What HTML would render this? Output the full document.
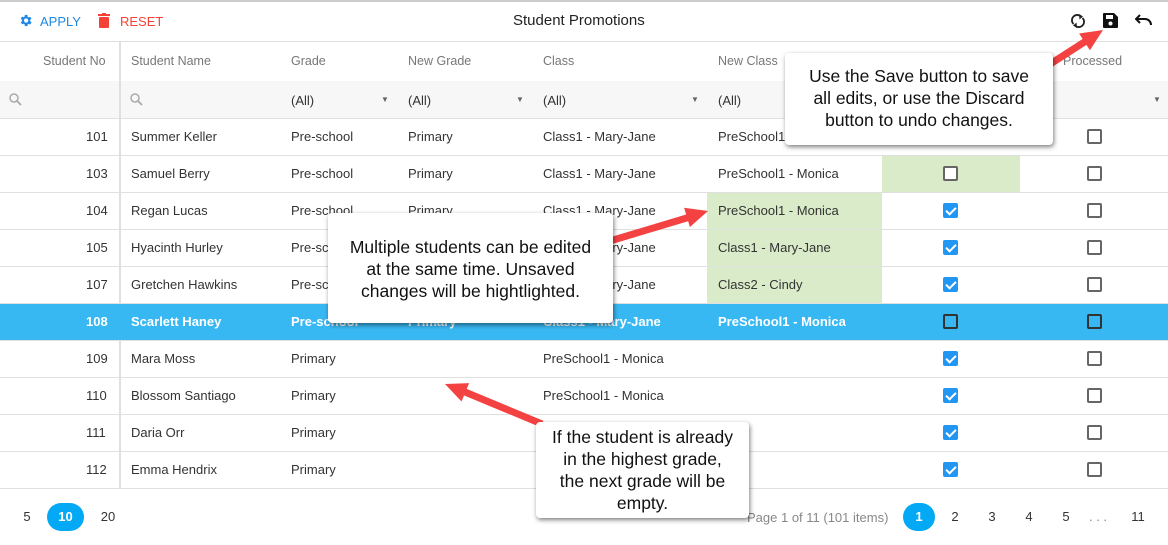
<!DOCTYPE html>
<html><head><meta charset="utf-8"><style>
*{box-sizing:border-box;margin:0;padding:0}
body{width:1168px;height:545px;overflow:hidden;background:#fff;font-family:"Liberation Sans",sans-serif;font-size:13px;color:#333;position:relative}
.a{position:absolute;white-space:nowrap}
.hl{position:absolute;left:0;width:1168px;height:1px;background:#e0e0e0}
.cb{position:absolute;width:15px;height:15px;border:2px solid #666;border-radius:2px;background:#fff}
.cb.on{background:#2196f3;border-color:#2196f3}
.cb.on:after{content:"";position:absolute;left:3px;top:0px;width:4px;height:8px;border:solid #fff;border-width:0 2px 2px 0;transform:rotate(45deg)}
.hd{color:#777;font-size:12.5px}
.tip{position:absolute;background:#fff;border-radius:4px;box-shadow:1px 2px 5px rgba(0,0,0,.5);font-size:17.5px;color:#111;text-align:center;line-height:22px}
.pg{position:absolute;top:503px;width:32px;height:28px;text-align:center;line-height:28px;font-size:13px;color:#333}
.pg.on{background:#03a9f4;color:#fff;border-radius:16px;font-weight:bold}
</style></head><body>
<div class="hl" style="top:0;height:2px;background:#ccc"></div>
<svg class="a" style="left:18px;top:13px" width="15" height="15" viewBox="0 0 24 24"><path fill="#1e88e5" d="M19.4 13a7.5 7.5 0 0 0 0-2l2.1-1.6-2-3.5-2.5 1a7 7 0 0 0-1.7-1L15 3h-4l-.4 2.7a7 7 0 0 0-1.7 1l-2.5-1-2 3.5L6.6 11a7.5 7.5 0 0 0 0 2l-2.1 1.6 2 3.5 2.5-1a7 7 0 0 0 1.7 1L11 21h4l.4-2.7a7 7 0 0 0 1.7-1l2.5 1 2-3.5zM13 15.5a3.5 3.5 0 1 1 0-7 3.5 3.5 0 0 1 0 7z"/></svg>
<div class="a" style="left:40px;top:14px;color:#1e88e5;font-size:13px">APPLY</div>
<svg class="a" style="left:98px;top:13px" width="12" height="15" viewBox="0 0 12 15"><rect x="0" y="1" width="12" height="2" fill="#f44336"/><rect x="4" y="0" width="4" height="2" fill="#f44336"/><rect x="1" y="4" width="10" height="11" rx="1" fill="#f44336"/></svg>
<div class="a" style="left:120px;top:14px;color:#f44336;font-size:13px">RESET</div>
<div class="a" style="left:513px;top:12px;font-size:15px;color:#222">Student Promotions</div>
<svg class="a" style="left:1071px;top:13px" width="14" height="16" viewBox="0 0 14 16"><path d="M2.5 11A5 5 0 0 1 10 3.5M11.5 5A5 5 0 0 1 4 12.5" fill="none" stroke="#222" stroke-width="1.8"/><path d="M8 1l4 2.5-3.5 3z M6 15l-4-2.5 3.5-3z" fill="#222"/></svg>
<svg class="a" style="left:1103px;top:13px" width="15" height="15" viewBox="0 0 15 15"><path d="M0 1a1 1 0 0 1 1-1h10l4 4v10a1 1 0 0 1-1 1H1a1 1 0 0 1-1-1z" fill="#111"/><rect x="3" y="2" width="7" height="4" fill="#fff"/><circle cx="7.5" cy="10.5" r="2" fill="#fff"/></svg>
<svg class="a" style="left:1135px;top:14px" width="17" height="12" viewBox="0 0 17 12"><path d="M5 1 1 5l4 4M1 5h9a6 6 0 0 1 6 6" fill="none" stroke="#111" stroke-width="2"/></svg>
<div class="hl" style="top:41px"></div>
<div class="hl" style="top:81px"></div>
<div class="a" style="left:0;top:81px;width:1168px;height:37px;background:#f7f7f7"></div>
<div class="a" style="left:119px;top:41px;width:2px;height:447px;background:#e0e0e0"></div>
<div class="a hd" style="left:43px;top:54px">Student No</div>
<div class="a hd" style="left:131px;top:54px">Student Name</div>
<div class="a hd" style="left:291px;top:54px">Grade</div>
<div class="a hd" style="left:408px;top:54px">New Grade</div>
<div class="a hd" style="left:543px;top:54px">Class</div>
<div class="a hd" style="left:718px;top:54px">New Class</div>
<div class="a hd" style="left:1063px;top:54px">Processed</div>
<svg class="a" style="left:9px;top:93px" width="13" height="13" viewBox="0 0 13 13"><circle cx="5" cy="5" r="4" fill="none" stroke="#aaa" stroke-width="1.5"/><path d="M8 8l4 4" stroke="#aaa" stroke-width="1.8"/></svg>
<svg class="a" style="left:130px;top:93px" width="13" height="13" viewBox="0 0 13 13"><circle cx="5" cy="5" r="4" fill="none" stroke="#aaa" stroke-width="1.5"/><path d="M8 8l4 4" stroke="#aaa" stroke-width="1.8"/></svg>
<div class="a" style="left:291px;top:93px">(All)</div><div class="a" style="left:381px;top:95px;font-size:8px;color:#666">▼</div>
<div class="a" style="left:408px;top:93px">(All)</div><div class="a" style="left:516px;top:95px;font-size:8px;color:#666">▼</div>
<div class="a" style="left:543px;top:93px">(All)</div><div class="a" style="left:691px;top:95px;font-size:8px;color:#666">▼</div>
<div class="a" style="left:718px;top:93px">(All)</div><div class="a" style="left:1153px;top:95px;font-size:8px;color:#666">▼</div>
<div class="hl" style="top:118px"></div>

<div class="a" style="left:882px;top:155px;width:138px;height:37px;background:#d9ebc8"></div>
<div class="a" style="left:707px;top:192px;width:175px;height:111px;background:#d9ebc8"></div>
<div class="a" style="left:0;top:303px;width:1168px;height:37px;background:#38b8f2"></div>

<div class="hl" style="top:155px"></div><div class="hl" style="top:192px"></div><div class="hl" style="top:229px"></div><div class="hl" style="top:266px"></div><div class="hl" style="top:303px"></div><div class="hl" style="top:340px"></div><div class="hl" style="top:377px"></div><div class="hl" style="top:414px"></div><div class="hl" style="top:451px"></div><div class="hl" style="top:488px"></div>

<div class="a" style="left:86px;top:129px">101</div><div class="a" style="left:131px;top:129px">Summer Keller</div><div class="a" style="left:291px;top:129px">Pre-school</div><div class="a" style="left:408px;top:129px">Primary</div><div class="a" style="left:543px;top:129px">Class1 - Mary-Jane</div><div class="a" style="left:718px;top:129px">PreSchool1 - Monica</div><div class="cb" style="left:1087px;top:129px"></div>
<div class="a" style="left:86px;top:166px">103</div><div class="a" style="left:131px;top:166px">Samuel Berry</div><div class="a" style="left:291px;top:166px">Pre-school</div><div class="a" style="left:408px;top:166px">Primary</div><div class="a" style="left:543px;top:166px">Class1 - Mary-Jane</div><div class="a" style="left:718px;top:166px">PreSchool1 - Monica</div><div class="cb" style="left:943px;top:166px"></div><div class="cb" style="left:1087px;top:166px"></div>
<div class="a" style="left:86px;top:203px">104</div><div class="a" style="left:131px;top:203px">Regan Lucas</div><div class="a" style="left:291px;top:203px">Pre-school</div><div class="a" style="left:408px;top:203px">Primary</div><div class="a" style="left:543px;top:203px">Class1 - Mary-Jane</div><div class="a" style="left:718px;top:203px">PreSchool1 - Monica</div><div class="cb on" style="left:943px;top:203px"></div><div class="cb" style="left:1087px;top:203px"></div>
<div class="a" style="left:86px;top:240px">105</div><div class="a" style="left:131px;top:240px">Hyacinth Hurley</div><div class="a" style="left:291px;top:240px">Pre-school</div><div class="a" style="left:543px;top:240px">Class1 - Mary-Jane</div><div class="a" style="left:718px;top:240px">Class1 - Mary-Jane</div><div class="cb on" style="left:943px;top:240px"></div><div class="cb" style="left:1087px;top:240px"></div>
<div class="a" style="left:86px;top:277px">107</div><div class="a" style="left:131px;top:277px">Gretchen Hawkins</div><div class="a" style="left:291px;top:277px">Pre-school</div><div class="a" style="left:543px;top:277px">Class1 - Mary-Jane</div><div class="a" style="left:718px;top:277px">Class2 - Cindy</div><div class="cb on" style="left:943px;top:277px"></div><div class="cb" style="left:1087px;top:277px"></div>
<div style="color:#fff;font-weight:bold"><div class="a" style="left:86px;top:314px">108</div><div class="a" style="left:131px;top:314px">Scarlett Haney</div><div class="a" style="left:291px;top:314px">Pre-school</div><div class="a" style="left:408px;top:314px">Primary</div><div class="a" style="left:543px;top:314px">Class1 - Mary-Jane</div><div class="a" style="left:718px;top:314px">PreSchool1 - Monica</div></div><div class="cb" style="left:943px;top:314px;background:transparent;border-color:#333"></div><div class="cb" style="left:1087px;top:314px;background:transparent;border-color:#333"></div>
<div class="a" style="left:86px;top:351px">109</div><div class="a" style="left:131px;top:351px">Mara Moss</div><div class="a" style="left:291px;top:351px">Primary</div><div class="a" style="left:543px;top:351px">PreSchool1 - Monica</div><div class="cb on" style="left:943px;top:351px"></div><div class="cb" style="left:1087px;top:351px"></div>
<div class="a" style="left:86px;top:388px">110</div><div class="a" style="left:131px;top:388px">Blossom Santiago</div><div class="a" style="left:291px;top:388px">Primary</div><div class="a" style="left:543px;top:388px">PreSchool1 - Monica</div><div class="cb on" style="left:943px;top:388px"></div><div class="cb" style="left:1087px;top:388px"></div>
<div class="a" style="left:86px;top:425px">111</div><div class="a" style="left:131px;top:425px">Daria Orr</div><div class="a" style="left:291px;top:425px">Primary</div><div class="cb on" style="left:943px;top:425px"></div><div class="cb" style="left:1087px;top:425px"></div>
<div class="a" style="left:86px;top:462px">112</div><div class="a" style="left:131px;top:462px">Emma Hendrix</div><div class="a" style="left:291px;top:462px">Primary</div><div class="cb on" style="left:943px;top:462px"></div><div class="cb" style="left:1087px;top:462px"></div>

<div class="pg" style="left:11px">5</div>
<div class="pg on" style="left:47px;width:37px">10</div>
<div class="pg" style="left:92px">20</div>
<div class="a" style="left:747px;top:510px;color:#888">Page 1 of 11 (101 items)</div>
<div class="pg on" style="left:903px">1</div>
<div class="pg" style="left:939px">2</div>
<div class="pg" style="left:976px">3</div>
<div class="pg" style="left:1013px">4</div>
<div class="pg" style="left:1050px">5</div>
<div class="pg" style="left:1082px;color:#888">. . .</div>
<div class="pg" style="left:1122px">11</div>

<svg class="a" style="left:0;top:0" width="1168" height="545">
<g stroke="#f44242" stroke-width="7" fill="none">
<line x1="1030" y1="77" x2="1086" y2="41"/>
<line x1="610" y1="241" x2="690" y2="217"/>
<line x1="542" y1="424" x2="465" y2="392"/>
</g>
<g fill="#f44242">
<polygon points="1103,30 1089.9,50.3 1079.1,33.5"/>
<polygon points="708,211 689.9,227 684.1,207.8"/>
<polygon points="445,384 469.1,383.1 461.5,401.5"/>
</g>
</svg>

<div class="tip" style="left:785px;top:53px;width:268px;height:92px;padding-top:12px">Use the Save button to save<br>all edits, or use the Discard<br>button to undo changes.</div>
<div class="tip" style="left:328px;top:213px;width:285px;height:110px;padding-top:23px">Multiple students can be edited<br>at the same time. Unsaved<br>changes will be hightlighted.</div>
<div class="tip" style="left:536px;top:422px;width:213px;height:96px;padding-top:4px">If the student is already<br>in the highest grade,<br>the next grade will be<br>empty.</div>
</body></html>
